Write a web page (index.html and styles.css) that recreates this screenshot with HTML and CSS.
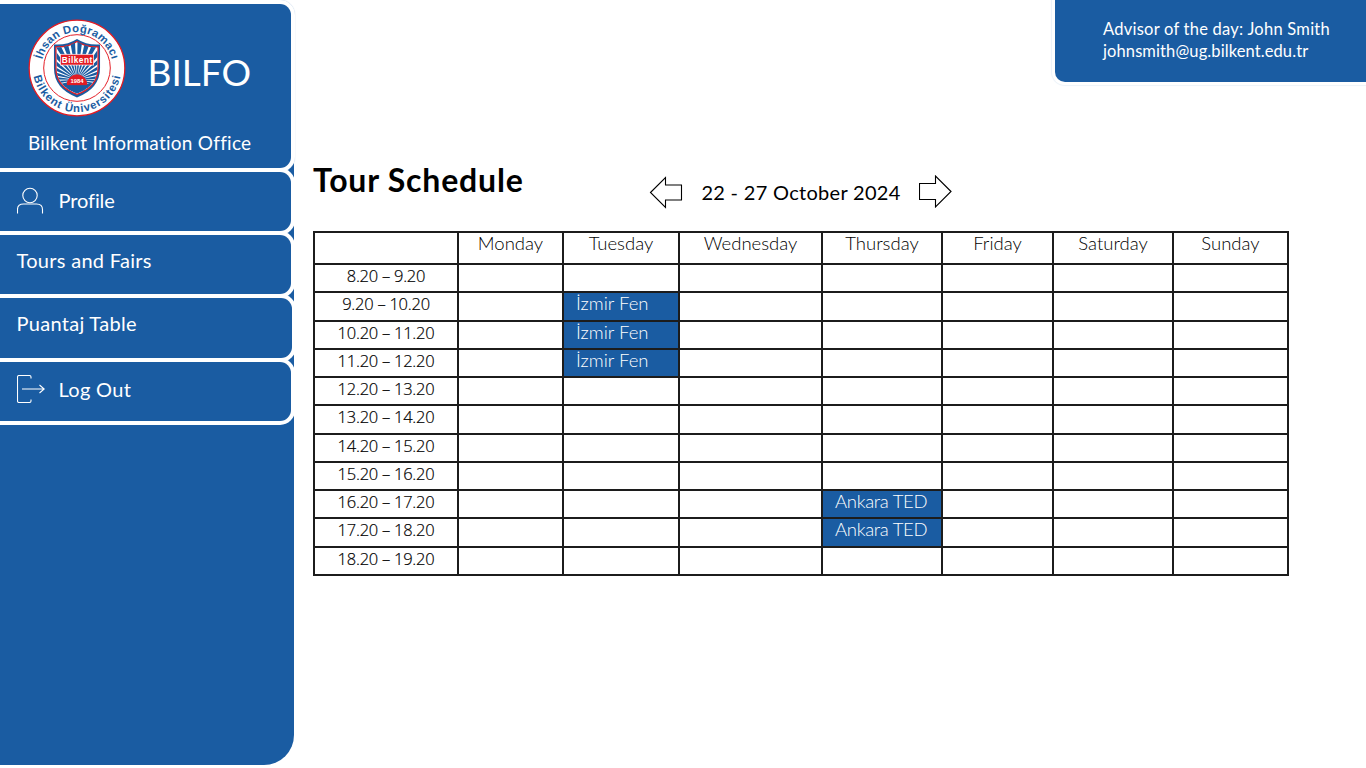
FILE: index.html
```html
<!DOCTYPE html>
<html lang="en">
<head>
<meta charset="utf-8">
<title>BILFO – Tour Schedule</title>
<link rel="stylesheet" href="styles.css">
</head>
<body>
<div class="page">
  <aside class="sidebar">
    <header class="card brand">
      <div class="brand-row">
        <svg class="logo" viewBox="0 0 100 100" width="98" height="98">
          <defs>
            <path id="arcTop" d="M13.500 50a36.500 36.500 0 0 1 73 0"/>
            <path id="arcBottom" d="M5 50a45 45 0 0 0 90 0"/>
            <clipPath id="shieldClip"><path d="M29 29Q41 29 50 23Q59 29 71 29V50Q71 68 50 76Q29 68 29 50Z"/></clipPath>
          </defs>
          <circle cx="50" cy="50" r="48.800" fill="#fff" stroke="#e31b23" stroke-width="1.3"/>
          <circle cx="50" cy="50" r="34" fill="#fff" stroke="#e31b23" stroke-width="1"/>
          <text class="logo-ring"><textPath href="#arcTop" startOffset="50%" text-anchor="middle" textLength="97">İhsan Doğramacı</textPath></text>
          <text class="logo-ring"><textPath href="#arcBottom" startOffset="50%" text-anchor="middle" textLength="124">Bilkent Üniversitesi</textPath></text>
          <path d="M26.500 26Q40 27 50 20.500Q60 27 73.500 26V50Q73.500 71 50 80Q26.500 71 26.500 50Z" fill="#1a5ba0"/>
          <path d="M28.500 28.500Q41 29 50 23Q59 29 71.500 28.500V50Q71.500 69 50 77Q28.500 69 28.500 50Z" fill="#fff" stroke="#e31b23" stroke-width="1.3"/>
          <g clip-path="url(#shieldClip)">
            <circle cx="50" cy="62" r="23" fill="none" stroke="#1a5ba0" stroke-width="46" stroke-dasharray="2.9 1.6"/>
            <path d="M28 66H72V80H28Z" fill="#1a5ba0"/>
          </g>
          <path d="M40 67a10 10 0 0 1 20 0Z" fill="#e31b23" stroke="#e31b23"/>
          <rect x="33" y="36" width="34" height="11" fill="#e31b23" stroke="#fff" stroke-width=".7"/>
          <text x="50" y="44.600" class="logo-name" textLength="31">Bilkent</text>
          <text x="50" y="65.500" class="logo-year">1984</text>
        </svg>
        <span class="brand-name">BILFO</span>
      </div>
      <div class="brand-sub">Bilkent Information Office</div>
    </header>
    <nav class="menu">
      <a class="card item profile">
        <svg class="icon" width="28" height="28" viewBox="0 0 28 28"><circle cx="13" cy="8.500" r="7.200"/><path d="M.500 26.500v-4q0-5.500 6-5.500h13q6 0 6 5.500v4"/></svg>
        <span>Profile</span>
      </a>
      <a class="card item tours"><span>Tours and Fairs</span></a>
      <a class="card item puantaj"><span>Puantaj Table</span></a>
      <a class="card item logout">
        <svg class="icon" width="28" height="28" viewBox="0 0 28 28"><path d="M14 3.500V2q0-1.500-1.500-1.500H2Q.500 .500 .500 2v24q0 1.500 1.500 1.500H12.500q1.500 0 1.500-1.500v-1.500M5 14H27.200M22.500 10l4.700 4-4.700 4"/></svg>
        <span>Log Out</span>
      </a>
    </nav>
  </aside>
  <main class="content">
    <div class="advisor">
      <div class="advisor-name">Advisor of the day: John Smith</div>
      <div class="advisor-mail">johnsmith@ug.bilkent.edu.tr</div>
    </div>
    <div class="heading">
      <h1>Tour Schedule</h1>
      <div class="week">
        <svg class="arrow left" width="34" height="34" viewBox="0 0 34 34"><path d="M1.500 17.500L16.500 2.500V10H32.500V25H16.500V32.500Z"/></svg>
        <span class="range">22 - 27 October 2024</span>
        <svg class="arrow right" width="34" height="34" viewBox="0 0 34 34"><path d="M32 16.500L16.500 1V8.500H.500V24.500H16.500V32Z"/></svg>
      </div>
    </div>
    <div class="schedule">
      <div class="cell day"></div><div class="cell day">Monday</div><div class="cell day">Tuesday</div><div class="cell day">Wednesday</div><div class="cell day">Thursday</div><div class="cell day">Friday</div><div class="cell day">Saturday</div><div class="cell day">Sunday</div>
      <div class="cell time">8.20 – 9.20</div><div class="cell"></div><div class="cell"></div><div class="cell"></div><div class="cell"></div><div class="cell"></div><div class="cell"></div><div class="cell"></div>
      <div class="cell time">9.20 – 10.20</div><div class="cell"></div><div class="cell booked izmir">İzmir Fen</div><div class="cell"></div><div class="cell"></div><div class="cell"></div><div class="cell"></div><div class="cell"></div>
      <div class="cell time">10.20 – 11.20</div><div class="cell"></div><div class="cell booked izmir">İzmir Fen</div><div class="cell"></div><div class="cell"></div><div class="cell"></div><div class="cell"></div><div class="cell"></div>
      <div class="cell time">11.20 – 12.20</div><div class="cell"></div><div class="cell booked izmir">İzmir Fen</div><div class="cell"></div><div class="cell"></div><div class="cell"></div><div class="cell"></div><div class="cell"></div>
      <div class="cell time">12.20 – 13.20</div><div class="cell"></div><div class="cell"></div><div class="cell"></div><div class="cell"></div><div class="cell"></div><div class="cell"></div><div class="cell"></div>
      <div class="cell time">13.20 – 14.20</div><div class="cell"></div><div class="cell"></div><div class="cell"></div><div class="cell"></div><div class="cell"></div><div class="cell"></div><div class="cell"></div>
      <div class="cell time">14.20 – 15.20</div><div class="cell"></div><div class="cell"></div><div class="cell"></div><div class="cell"></div><div class="cell"></div><div class="cell"></div><div class="cell"></div>
      <div class="cell time">15.20 – 16.20</div><div class="cell"></div><div class="cell"></div><div class="cell"></div><div class="cell"></div><div class="cell"></div><div class="cell"></div><div class="cell"></div>
      <div class="cell time">16.20 – 17.20</div><div class="cell"></div><div class="cell"></div><div class="cell"></div><div class="cell booked ankara">Ankara TED</div><div class="cell"></div><div class="cell"></div><div class="cell"></div>
      <div class="cell time">17.20 – 18.20</div><div class="cell"></div><div class="cell"></div><div class="cell"></div><div class="cell booked ankara">Ankara TED</div><div class="cell"></div><div class="cell"></div><div class="cell"></div>
      <div class="cell time">18.20 – 19.20</div><div class="cell"></div><div class="cell"></div><div class="cell"></div><div class="cell"></div><div class="cell"></div><div class="cell"></div><div class="cell"></div>
    </div>
  </main>
</div>
</body>
</html>
```
FILE: styles.css
```css
* { box-sizing: border-box; }
body { margin: 0; background: #fff; font-family: Lato, "Noto Sans", sans-serif; color: #000; }
.page { display: flex; width: 1366px; height: 768px; overflow: hidden; }

.sidebar { width: 294px; height: 764.5px; flex: none; color: #fff; border-radius: 0 0 30px 0;
  background: linear-gradient(transparent 100px, #1a5ca2 100px); }
.card { display: flex; width: 295px; border: 4px solid #fff; border-left: 0; border-radius: 0 15px 15px 0; background: #1a5ca2; }
.brand { height: 172px; flex-direction: column; box-shadow: 0 0 1px #a9c3e0; }
.brand-row { display: flex; align-items: center; height: 98px; margin: 15px 0 0 28px; gap: 21.5px; }
.logo { flex: none; }
.logo-ring { font: 700 11.5px "Liberation Sans", sans-serif; fill: #1a5ca2; }
.logo-name { font: 700 8.5px "Liberation Sans", sans-serif; fill: #fff; text-anchor: middle; }
.logo-year { font: 700 6px "Liberation Sans", sans-serif; fill: #fff; text-anchor: middle; }
.brand-name { font-size: 37px; line-height: 44px; padding-top: 8px; }
.brand-sub { font-size: 19px; line-height: 24px; margin: 14px 0 0 28px; letter-spacing: .26px; white-space: nowrap; }

.item { height: 67px; margin-top: -4px; padding-left: 16.5px; font-size: 20px; line-height: 24px; letter-spacing: .3px; }
.icon { flex: none; fill: none; stroke: #fff; stroke-width: 1.1; margin-right: 14px; }
.profile .icon { margin-top: 15px; }
.profile span { margin-top: 16px; letter-spacing: -.1px; }
.tours span { margin-top: 13px; }
.puantaj { width: 296px; height: 67.500px; }
.puantaj span { margin-top: 13px; }
.logout { height: 67.500px; }
.logout .icon { margin-top: 13px; }
.logout span { margin-top: 15px; }

.content { flex: 1; display: flex; flex-direction: column; padding-left: 19px; }
.advisor { align-self: flex-end; width: 311px; height: 82px; padding: 18px 0 0 48px; border-radius: 0 0 0 10px; background: #1a5ca2;
  color: #fff; font-size: 16.500px; line-height: 22px; letter-spacing: .24px; white-space: nowrap; box-shadow: 0 0 0 3px #fff, 0 0 1px 4px #edf3f9; }
.advisor-mail { letter-spacing: .1px; }
.heading { display: flex; height: 149px; }
h1 { margin: 78px 0 0; width: 336px; font-size: 32px; line-height: 40px; font-weight: 700; letter-spacing: .8px; }
.week { display: flex; margin-top: 93px; height: 34px; align-items: center; }
.arrow { flex: none; fill: #fff; stroke: #000; stroke-width: 1.1; }
.range { width: 236px; text-align: center; font-size: 20px; line-height: 34px; letter-spacing: .3px; }

.schedule { display: grid; width: 976px; border: solid #1c1c1c; border-width: 2px 0 0 2px;
  grid-template-columns: 144px 105px 116px 143px 120px 111px 120px 115px;
  grid-template-rows: 32px repeat(11, 28.25px); }
.cell { border: solid #1c1c1c; border-width: 0 2px 2px 0; text-align: center; white-space: nowrap; }
.day { font-size: 18.500px; line-height: 20px; font-weight: 300; }
.time { font: 300 16.5px/22px "Open Sans", "Noto Sans", sans-serif; letter-spacing: -.25px; -webkit-text-stroke: .2px #000; }
.booked { background: #1a5ca2; color: #fff; text-align: left; padding-left: 12px; font-size: 18.500px; line-height: 20px; font-weight: 300; }
.ankara { letter-spacing: -.3px; }
```
